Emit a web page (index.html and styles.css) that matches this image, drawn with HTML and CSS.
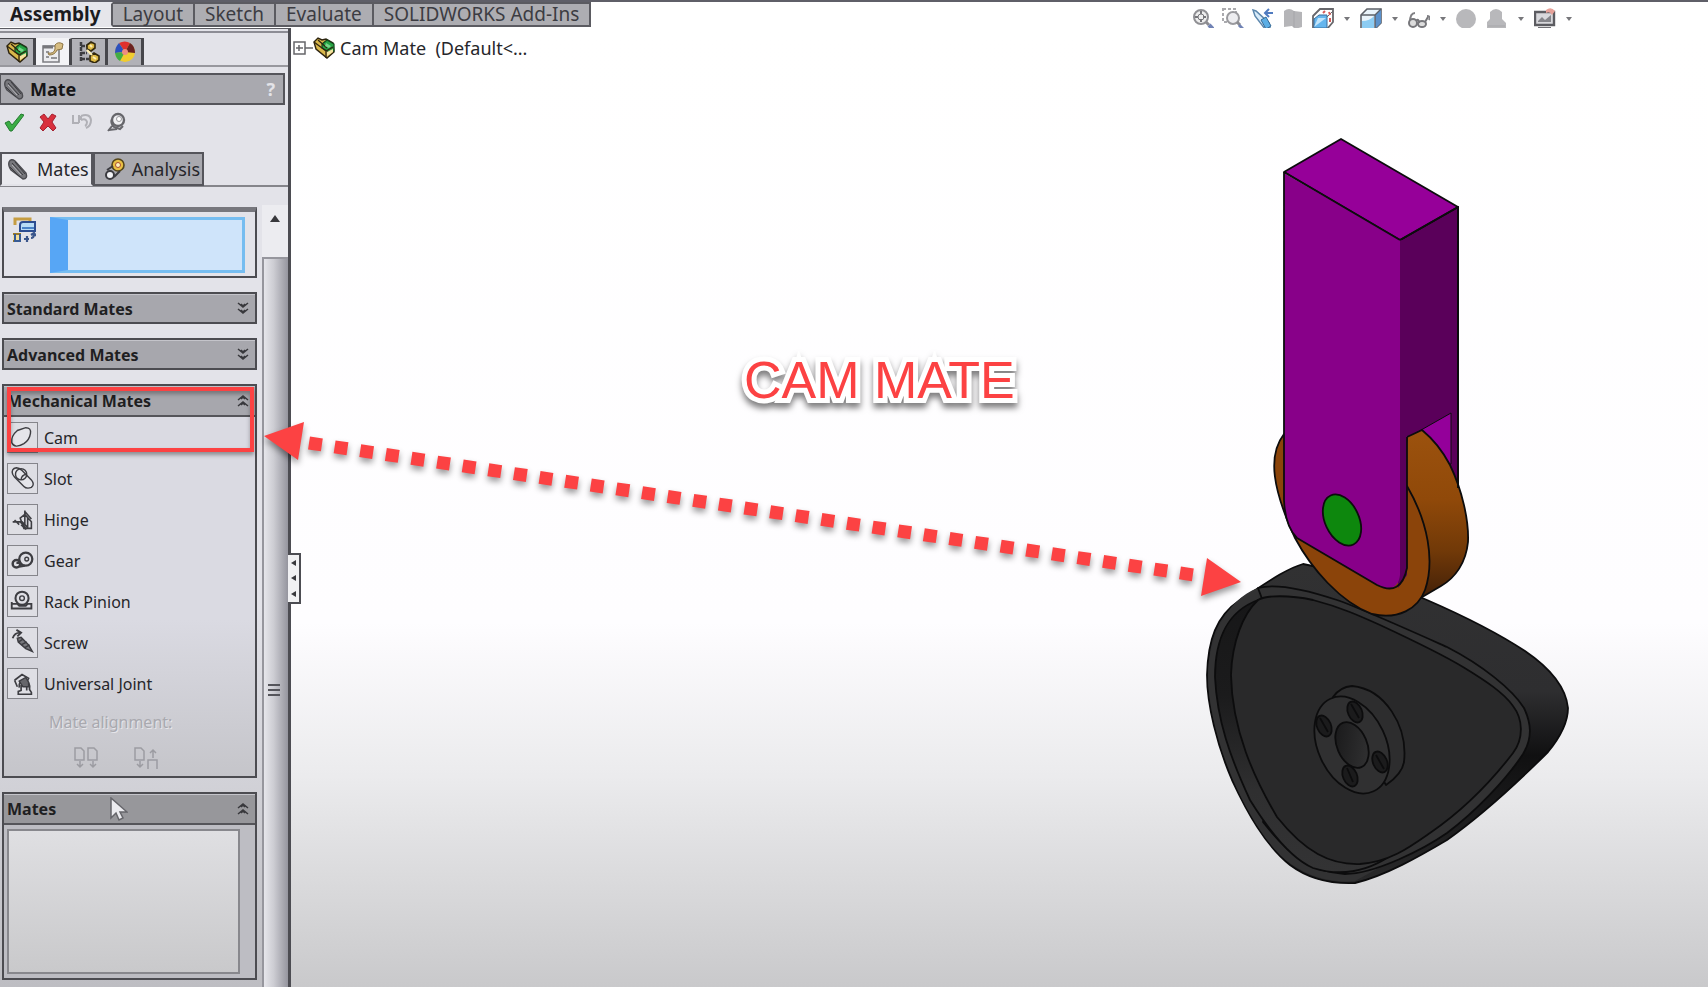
FILE: index.html
```html
<!DOCTYPE html>
<html lang="en">
<head>
  <meta charset="UTF-8" />
  <meta name="viewport" content="width=device-width, initial-scale=1.0" />
  <title>SOLIDWORKS - Cam Mate</title>
  <link rel="stylesheet" href="styles.css">
</head>
<body>
  <!-- shared icons -->
  <svg class="sprite" aria-hidden="true">
    <symbol id="i-clip" viewBox="0 0 22 22">
      <path d="M2 4q2-4 6-1l11 12q2 6-3 6L4 12Q1 8 2 4z" fill="#77777c" stroke="#4b4b50" stroke-width="1.4"/>
      <path d="M5 5l11 12M8 4l10 12M3 9l10 10" stroke="#3c3c40" stroke-width="1" fill="none"/>
      <path d="M5 7l9 10" stroke="#b5b5ba" stroke-width="1"/>
    </symbol>
    <symbol id="i-assembly" viewBox="0 0 22 22">
      <path d="M1 5l4-4 4 2 4-1 7 4 1 9-7 6L3 12z" fill="#d9b74b" stroke="#2e2410" stroke-width="1.4"/>
      <path d="M9 7l5-4 7 4v7l-5 1-7-4z" fill="#25a343" stroke="#12451d" stroke-width="1.2"/>
      <path d="M1 5l12 9v7M5 3l9 8M13 14l7-4" stroke="#2e2410" stroke-width="1.3" fill="none"/>
      <path d="M14 15l6-3v3l-6 4z" fill="#f4e3a0"/>
      <path d="M13 6l5 3-2 2-4-2z" fill="#77d68b"/>
    </symbol>
    <symbol id="i-down" viewBox="0 0 12 14">
      <path d="M1 1l5 4 5-4M1 7l5 4 5-4M4 2l2 2 2-2M4 8l2 2 2-2" fill="none" stroke="#38383c" stroke-width="1.5"/>
    </symbol>
    <symbol id="i-up" viewBox="0 0 12 14">
      <path d="M1 6l5-4 5 4M1 12l5-4 5 4M4 5l2-2 2 2M4 11l2-2 2 2" fill="none" stroke="#38383c" stroke-width="1.5"/>
    </symbol>
  </svg>

  <div class="app">
    <header class="topbar">
      <nav class="ribbon">
        <button class="ribbon-tab active">Assembly</button>
        <button class="ribbon-tab">Layout</button>
        <button class="ribbon-tab">Sketch</button>
        <button class="ribbon-tab">Evaluate</button>
        <button class="ribbon-tab">SOLIDWORKS Add-Ins</button>
      </nav>
      <div class="view-tools">
        <button class="tool" aria-label="Zoom to fit"><svg viewBox="0 0 22 22"><circle cx="9" cy="9" r="7" fill="#eee" stroke="#909094" stroke-width="2"/><path d="M9 3v12M3 9h12" stroke="#77777b" stroke-width="2" stroke-dasharray="3 5"/><circle cx="9" cy="9" r="3" fill="none" stroke="#77777b"/><path d="M14 14l3 3" stroke="#8c8c90" stroke-width="3"/><path d="M17 17l4 4" stroke="#7183b5" stroke-width="4"/></svg></button>
        <button class="tool" aria-label="Zoom to area"><svg viewBox="0 0 22 22"><path d="M1 1h13v13H1z" fill="none" stroke="#aaaaae" stroke-width="2" stroke-dasharray="3 2"/><circle cx="11" cy="10" r="6" fill="#ededf0" stroke="#9a9a9e" stroke-width="2"/><path d="M15 14l3 3" stroke="#8c8c90" stroke-width="3"/><path d="M17 17l4 4" stroke="#7183b5" stroke-width="3"/></svg></button>
        <button class="tool" aria-label="Previous view"><svg viewBox="0 0 22 22"><path d="M1 2l3 1 13 12 1 5-5 1L3 8z" fill="#d9ecfa" stroke="#5c87ad" stroke-width="1.5"/><path d="M9 12l5-3 5 9-5 3z" fill="#5caee5" stroke="#376b96"/><path d="M21 5h-7m3-4l-4 4 4 4" fill="none" stroke="#507bc0" stroke-width="2"/></svg></button>
        <button class="tool" aria-label="Section view"><svg viewBox="0 0 22 22"><path d="M2 3q5-4 10 0l8 1v15l-7 2-3-3-8 1z" fill="#b5b5b8"/><path d="M12 3v16" stroke="#a5a5a9"/></svg></button>
        <button class="tool" aria-label="View orientation"><svg viewBox="0 0 22 22"><path d="M1 8l7-7h13v13l-6 7H1z" fill="#fff" stroke="#66666b" stroke-width="1.8"/><path d="M2 20V11l5-4h8v13z" fill="#65b5ed" stroke="#386d9c"/><path d="M2 19l4-9h8z" fill="#c3e5fb"/><path d="M15 9l6-6" stroke="#66666b"/><path d="M11 5l2-2M17 4l1 3M18 10v4" stroke="#d75b58" stroke-width="2"/></svg></button>
        <button class="drop" aria-label="More orientations"></button>
        <button class="tool" aria-label="Display style"><svg viewBox="0 0 22 22"><path d="M1 7l6-6h14v14l-6 6H1z" fill="#eaf4fb" stroke="#5c6068" stroke-width="1.6"/><path d="M15 7l6-6v14l-6 6z" fill="#5b91cb"/><path d="M2 20V13q8 0 12-5v12z" fill="#8cccf3"/><path d="M1 7h14v14M15 7l6-6" fill="none" stroke="#5c6068" stroke-width="1.4"/></svg></button>
        <button class="drop" aria-label="More display styles"></button>
        <button class="tool" aria-label="Hide or show items"><svg viewBox="0 0 22 22"><path d="M7 5Q2 5 2 14M19 8q4 0 2 4" fill="none" stroke="#808084" stroke-width="2"/><circle cx="5" cy="15" r="4" fill="#ddd" stroke="#77777b" stroke-width="2"/><ellipse cx="14" cy="16" rx="4" ry="3" fill="#ddd" stroke="#77777b" stroke-width="2"/><path d="M8 13q3-3 3 2M17 14l3-5" fill="none" stroke="#77777b" stroke-width="2"/></svg></button>
        <button class="drop" aria-label="More visibility options"></button>
        <button class="tool" aria-label="Edit appearance"><svg viewBox="0 0 22 22"><circle cx="10" cy="11" r="10" fill="#b8b8bb"/></svg></button>
        <button class="tool" aria-label="Apply scene"><svg viewBox="0 0 22 22"><path d="M4 4q6-6 12 0v7l4 4v6H1v-7l3-3z" fill="#b8b8bb"/><path d="M2 18h17" stroke="#a7a7aa"/></svg></button>
        <button class="drop" aria-label="More scenes"></button>
        <button class="tool" aria-label="View settings"><svg viewBox="0 0 22 22"><path d="M1 4h19v13H1z" fill="#d8d8dc" stroke="#5c5c61" stroke-width="2.4"/><path d="M4 13l4-4 3 3 6-5v7H4z" fill="#85858a"/><path d="M4 20h13" stroke="#707075" stroke-width="2"/><path d="M12 2q5-4 9 1l-3 4q-2-4-6-2z" fill="#e7a29a"/></svg></button>
        <button class="drop" aria-label="More view settings"></button>
      </div>
    </header>

    <div class="workspace">
      <aside class="panel">
        <nav class="manager-tabs">
          <button class="manager-tab" aria-label="Feature tree"><svg viewBox="0 0 22 22"><use href="#i-assembly"/></svg></button>
          <button class="manager-tab active" aria-label="Property manager"><svg viewBox="0 0 22 22"><path d="M1 5h16v16H1z" fill="#ededf0" stroke="#7d7d82" stroke-width="1.6"/><path d="M1 6h10" stroke="#77777b" stroke-width="3"/><path d="M4 11h3M4 16h3M9 17h6" stroke="#77777b" stroke-width="1.5"/><path d="M6 12q6 1 7-4V4q3-4 8-1l-1 5-5 1q-2 5-8 5z" fill="#d7bd82" stroke="#8d7545"/></svg></button>
          <button class="manager-tab" aria-label="Configurations"><svg viewBox="0 0 22 22"><path d="M3 1v20M3 5h6M3 12h6M3 18h8" stroke="#3c3c40" stroke-width="2.5" stroke-dasharray="4 1"/><path d="M9 4l4-3 4 2v4l-4 3-4-2zM12 15l4-3 5 3v4l-4 3-5-2z" fill="#ddb944" stroke="#33290e" stroke-width="1.6"/><path d="M9 9l5 5M12 4l2 2M15 16l3 2" stroke="#fff0b5" stroke-width="2"/></svg></button>
          <button class="manager-tab" aria-label="Appearances"><svg viewBox="0 0 22 22"><circle cx="11" cy="11" r="10" fill="#f1cc2e"/><path d="M11 11L5 2Q11-1 16 2z" fill="#df302d"/><path d="M11 11l5-9q5 3 5 10z" fill="#6b2221"/><path d="M11 11L5 2Q1 6 1 12z" fill="#2b50be"/><path d="M11 11L1 12q1 6 5 8z" fill="#42ad45"/><circle cx="11" cy="11" r="3" fill="#ef8c80"/></svg></button>
        </nav>

        <div class="pm-title">
          <svg class="clip" viewBox="0 0 22 22"><use href="#i-clip"/></svg>
          <h1>Mate</h1>
          <button class="help" aria-label="Help">?</button>
        </div>

        <div class="pm-actions">
          <button aria-label="OK"><svg viewBox="0 0 20 20"><path d="M1 11l4-2 3 4L17 2l3 1L8 19H6z" fill="#3bad45" stroke="#257b31"/></svg></button>
          <button aria-label="Cancel"><svg viewBox="0 0 20 20"><path d="M2 5l4-3 4 5 4-5 4 2-4 6 4 6-3 3-5-5-5 5-3-3 4-6z" fill="#d9303d" stroke="#a52231"/></svg></button>
          <button aria-label="Undo"><svg viewBox="0 0 20 20"><path d="M1 3v8h6M7 3v8M9 4q9-3 10 4 0 6-5 8M9 4v4M9 8q5-2 6 2 0 3-2 4" fill="none" stroke="#b0b0b6" stroke-width="2"/></svg></button>
          <button aria-label="Keep visible"><svg viewBox="0 0 20 20"><circle cx="12" cy="8" r="6" fill="#efeff2" stroke="#66666b" stroke-width="2.4"/><path d="M6 7q-2 4 2 8l6 2 3-3M6 14l-4 5M3 18l8-1" fill="none" stroke="#66666b" stroke-width="2"/><circle cx="13" cy="7" r="2.5" fill="#fff" stroke="#99999e"/></svg></button>
        </div>

        <nav class="pm-tabs">
          <button class="pm-tab active"><svg viewBox="0 0 22 22"><use href="#i-clip"/></svg>Mates</button>
          <button class="pm-tab"><svg viewBox="0 0 22 22"><circle cx="14" cy="7" r="6" fill="#e9bf43" stroke="#54451a" stroke-width="1.6"/><circle cx="14" cy="7" r="2.5" fill="#fff2bd" stroke="#aa4e33"/><circle cx="6" cy="17" r="4" fill="#f4f4f7" stroke="#3b3b40" stroke-width="2"/><path d="M3 12l6-4M10 19l6-6" stroke="#3b3b40" stroke-width="2"/></svg>Analysis</button>
        </nav>

        <div class="pm-body">
          <div class="groups">
            <section class="group selections">
              <svg class="sel-icon" viewBox="0 0 24 26"><path d="M3 8V2h15v4" fill="none" stroke="#c69d42" stroke-width="3"/><path d="M8 12V8q0-3 3-3h12v9H8z" fill="#b7dcf7" stroke="#2c4d91" stroke-width="2"/><path d="M10 11h12" stroke="#4a83c7" stroke-width="2"/><path d="M1 17h7v7H1" fill="#f2df9c" stroke="#9b7b29" stroke-width="2"/><path d="M3 17v7h5v-7" fill="none" stroke="#375b95" stroke-width="2"/><path d="M12 22h5M15 19v6M19 21q3 0 3-4m-3 1l3-2 2 3" fill="none" stroke="#3b568b" stroke-width="2.2"/></svg>
              <textarea class="sel-box" aria-label="Mate selections"></textarea>
            </section>

            <section class="group">
              <button class="group-head">Standard Mates<svg viewBox="0 0 12 14"><use href="#i-down"/></svg></button>
            </section>

            <section class="group">
              <button class="group-head">Advanced Mates<svg viewBox="0 0 12 14"><use href="#i-down"/></svg></button>
            </section>

            <section class="group mechanical">
              <button class="group-head">Mechanical Mates<svg viewBox="0 0 12 14"><use href="#i-up"/></svg></button>
              <div class="mate-list">
                <button class="mate"><svg viewBox="0 0 31 31"><path d="M4 21Q3 14 10 8L19 5q6 0 5 6-1 7-7 11-10 6-13-1z" fill="#e5e5ea"/></svg>Cam</button>
                <button class="mate"><svg viewBox="0 0 31 31"><path d="M5 11q-2-6 4-7 3 0 6 3l10 10q4 5 0 8-5 2-8-1L7 14z" fill="#e5e5ea"/><circle cx="14" cy="11" r="6" fill="none"/><path d="M14 17q0-5 6-6" fill="none"/></svg>Slot</button>
                <button class="mate"><svg viewBox="0 0 31 31"><path d="M5 18h8l7 8M7 16l5 5M13 14l5-4 7 8v7h-8zM18 6v15M18 7l7 8M14 17l8 8M14 21l5 5M21 14v11" fill="none" stroke-width="1.7"/></svg>Hinge</button>
                <button class="mate"><svg viewBox="0 0 31 31"><circle cx="19" cy="14" r="7" fill="none" stroke-width="2.4"/><circle cx="20" cy="14" r="2" fill="none"/><circle cx="9" cy="19" r="4" fill="none" stroke-width="2.6"/><path d="M9 18h4M12 22l6-1" stroke-width="2.4"/></svg>Gear</button>
                <button class="mate"><svg viewBox="0 0 31 31"><circle cx="15" cy="12" r="7" fill="none" stroke-width="2.2"/><circle cx="15" cy="12" r="2.5" fill="none"/><path d="M4 18h6l2 2h7l2-2h4v5H4zM4 16v5" fill="none" stroke-width="2"/></svg>Rack Pinion</button>
                <button class="mate"><svg viewBox="0 0 31 31"><path d="M5 11q2-6 8-6M9 2l5 3-4 4" fill="none" stroke-width="2"/><path d="M10 11l4-1 8 8 4 7-7-3-8-7z" fill="#77777c" stroke-width="1.6"/><path d="M11 15l5-3M14 18l6-3M18 21l5-3" stroke-width="1.6"/></svg>Screw</button>
                <button class="mate"><svg viewBox="0 0 31 31"><path d="M7 12l8-6 7 4-2 4M7 12l3 7M12 20q-1-8 6-7 6 0 5 9l2 3v2H11v-3l3-1v-5h6v5" fill="none" stroke-width="1.8"/><path d="M12 13l7-4 3 5v5h-6z" fill="#66666b"/></svg>Universal Joint</button>
              </div>
              <div class="align">
                <span>Mate alignment:</span>
                <div class="align-buttons">
                  <button disabled aria-label="Aligned"><svg viewBox="0 0 26 24"><path d="M2 14V2h6l3 3v9zM15 14V2h6l3 3v9zM7 15v6m-3-3l3 3 3-3M20 15v6m-3-3l3 3 3-3"/></svg></button>
                  <button disabled aria-label="Anti-aligned"><svg viewBox="0 0 26 24"><path d="M2 14V2h6l3 3v9zM7 15v6m-3-3l3 3 3-3M20 12V4m-3 3l3-3 3 3M15 23V14h9v9"/></svg></button>
                </div>
              </div>
              <div class="highlight"></div>
            </section>

            <section class="group mates">
              <button class="group-head">Mates<svg viewBox="0 0 12 14"><use href="#i-up"/></svg></button>
              <select class="mates-box" size="4" aria-label="Mates"></select>
              <svg class="cursor" viewBox="0 0 18 25"><path d="M1 1v20l5-5 3 7 4-2-3-6h7z" fill="#ececf0" stroke="#66666b" stroke-width="1.5"/></svg>
            </section>
          </div>

          <div class="scrollbar">
            <button class="scroll-up" aria-label="Scroll up"></button>
            <div class="thumb"><i></i><i></i><i></i></div>
          </div>
        </div>
        <button class="splitter" aria-label="Collapse panel"><i></i><i></i><i></i></button>
      </aside>

      <main class="viewport">
        <div class="tree">
          <svg class="expander" viewBox="0 0 20 14"><path d="M1 1h11v12H1zM3 7h7M6 4v6M12 7h8" fill="none" stroke="#66666a" stroke-width="1.5"/></svg>
          <svg class="tree-icon" viewBox="0 0 22 22"><use href="#i-assembly"/></svg>
          <span>Cam Mate &nbsp;(Default&lt;...</span>
        </div>
      </main>
    </div>

    <svg class="model" viewBox="1200 130 380 760" role="img" aria-label="Cam and follower assembly">
      <defs>
        <linearGradient id="wheel" x1="0" y1="0" x2="0" y2="1">
          <stop offset="0" stop-color="#9c520e"/><stop offset=".4" stop-color="#904909"/><stop offset=".7" stop-color="#713908"/><stop offset="1" stop-color="#3d1d08"/>
        </linearGradient>
        <linearGradient id="camside" x1="0" y1="0" x2="0" y2="1">
          <stop offset="0" stop-color="#313132"/><stop offset=".4" stop-color="#2e2e30"/><stop offset=".6" stop-color="#101011"/><stop offset="1" stop-color="#29292a"/>
        </linearGradient>
        <linearGradient id="pocket" x1="0" y1="0" x2="0" y2="1">
          <stop offset="0" stop-color="#171718"/><stop offset=".35" stop-color="#1b1b1c"/><stop offset=".7" stop-color="#2f2f30"/><stop offset="1" stop-color="#333334"/>
        </linearGradient>
        <linearGradient id="bore" x1="0" y1="0" x2="1" y2="1">
          <stop offset="0" stop-color="#171718"/><stop offset="1" stop-color="#343435"/>
        </linearGradient>
      </defs>
      <g stroke="#0c0c0d" stroke-width="1.8" stroke-linejoin="round">
        <!-- cam -->
        <path fill="url(#camside)" d="M1303 564C1285 569 1262 586 1240 600C1216 616 1208 640 1207 675C1207 705 1217 745 1232 780C1247 812 1265 845 1290 865C1310 880 1332 884 1355 883C1385 876 1420 856 1447 840C1485 813 1520 780 1548 752C1562 735 1568 722 1568 708C1566 688 1550 668 1525 651C1490 628 1450 610 1427 600L1380 580z"/>
        <path fill="#323233" stroke="none" d="M1258 588C1225 600 1209 640 1208 675C1208 705 1218 745 1233 780C1247 812 1268 848 1291 864Q1320 884 1355 881L1397 858L1258 600z"/>
        <path fill="#323233" d="M1258 588C1276 583 1304 589 1337 600C1360 608 1400 626 1447 647C1482 665 1512 689 1524 708C1531 723 1533 737 1523 754C1506 780 1475 812 1447 833C1424 849 1375 874 1345 874C1311 872 1290 856 1263 822L1300 700z" />
        <path fill="url(#pocket)" d="M1258 600C1226 612 1215 640 1215 677C1217 720 1230 757 1250 800C1268 829 1290 858 1313 868C1345 878 1372 868 1390 856L1300 800L1240 640z"/>
        <path fill="#29292a" d="M1258 600C1266 595 1290 595 1313 600C1340 607 1360 616 1380 625C1410 639 1440 653 1463 667C1486 681 1504 693 1513 706C1523 719 1524 738 1513 753C1490 783 1462 811 1430 833C1410 847 1390 862 1360 864C1330 865 1305 852 1277 817C1254 778 1232 730 1231 675C1232 642 1243 614 1258 600z"/>
        <!-- hub -->
        <path fill="#2d2d2e" d="M1333 697Q1340 687 1352 686C1385 689 1408 726 1404 762Q1402 774 1386 785L1360 740z"/>
        <ellipse cx="1352" cy="745" rx="34" ry="51" transform="rotate(-25 1352 745)" fill="#303031"/>
        <ellipse cx="1352" cy="745" rx="15" ry="24" transform="rotate(-23 1352 745)" fill="url(#bore)"/>
        <g fill="#1b1b1c">
          <ellipse cx="1355" cy="712" rx="7" ry="11" transform="rotate(-23 1355 712)"/>
          <ellipse cx="1324" cy="726" rx="7" ry="11" transform="rotate(-23 1324 726)"/>
          <ellipse cx="1380" cy="762" rx="7" ry="11" transform="rotate(-23 1380 762)"/>
          <ellipse cx="1350" cy="776" rx="7" ry="11" transform="rotate(-23 1350 776)"/>
        </g>
        <path fill="none" d="M1351 704l8 14M1320 718l8 14M1376 755l8 14M1347 768l6 14"/>
        <!-- follower -->
        <path fill="#5a005a" d="M1400 240L1458 207V492L1400 480z"/>
        <path fill="#94009a" stroke-width="1" d="M1451 413L1407 438V470L1451 464z"/>
        <path fill="url(#wheel)" d="M1407 437L1422 430Q1439 444 1450 465C1462 490 1469 520 1468 542C1466 563 1455 578 1441 586L1412 603L1395 520z"/>
        <path fill="#8b440a" d="M1284 434C1267 456 1273 490 1295 538C1311 568 1340 602 1372 614C1398 620 1418 609 1425 590C1435 561 1428 522 1407 486z"/>
        <path fill="#960099" d="M1284 172L1341 139L1458 207L1400 240z"/>
        <path fill="#5a005a" stroke="none" d="M1398 240h9V575L1398 588z"/>
        <path fill="#880089" stroke="none" d="M1284 173L1400 240V575Q1398 591 1383 588L1297 538Q1284 523 1284 500z"/>
        <path fill="none" d="M1284 172V500Q1285 526 1297 538L1377 585Q1401 597 1407 568V437M1284 172L1400 240M1400 240L1458 207V488"/>
        <ellipse cx="1342" cy="520" rx="17" ry="27" transform="rotate(-25 1342 520)" fill="#0d870d"/>
      </g>
    </svg>

    <svg class="arrow" viewBox="260 410 990 200" aria-hidden="true">
      <path d="M309 443L1194 575" stroke="#fc4243" stroke-width="13" stroke-dasharray="13 12.9" fill="none"/>
      <path d="M264 436L304 422L298 460zM1241 582L1207 558L1201 596z" fill="#fc4243"/>
    </svg>
    <p class="callout">CAM MATE</p>
  </div>
</body>
</html>
```
FILE: styles.css
```css
* {
  box-sizing: border-box;
}
body {
  margin: 0;
  font-family: "Noto Sans", "Open Sans", sans-serif;
  font-size: 16px;
  color: #26262a;
  background: #fff;
}
button {
  margin: 0;
  padding: 0;
  border: none;
  background: none;
  color: inherit;
  font: inherit;
  cursor: pointer;
}
svg {
  display: block;
  flex: none;
}
.sprite {
  position: absolute;
  width: 0;
  height: 0;
}
.app {
  position: relative;
  display: flex;
  flex-direction: column;
  min-height: 100vh;
  overflow: hidden;
}

/* top bar */
.topbar {
  display: flex;
  justify-content: space-between;
  border-top: 2px solid #5f5f68;
}
.ribbon {
  display: flex;
}
.ribbon-tab {
  height: 25px;
  padding: 0 10px 2px;
  border: 2px solid #5b5b61;
  border-left-width: 0;
  background: #adadb2;
  font-size: 19px;
  line-height: 20px;
  color: #3c3c42;
  white-space: nowrap;
}
.ribbon-tab.active {
  border-color: #e6e6eb #5b5b61 #e6e6eb #e6e6eb;
  background: #e6e6eb;
  font-weight: bold;
  color: #1b1b1e;
}
.view-tools {
  display: flex;
  align-items: center;
  gap: 8px;
  padding: 8px 134px 0 0;
  height: 26px;
}
.tool svg {
  width: 22px;
  height: 22px;
}
.drop {
  width: 10px;
  height: 22px;
}
.drop::before {
  content: "";
  display: block;
  width: 0;
  margin: auto;
  border: 3px solid transparent;
  border-top: 4px solid #77777b;
  border-bottom: 0;
}

/* property manager */
.workspace {
  display: flex;
  flex: 1;
}
.panel {
  position: relative;
  display: flex;
  flex-direction: column;
  width: 291px;
  flex: none;
  border-right: 3px solid #4c4c52;
  border-top: 1px solid #5b5b61;
  background: linear-gradient(#e3e3e9 0, #e3e3e9 60%, #d4d4da 76%, #bdbdc2 100%);
}
.manager-tabs {
  display: flex;
  margin-top: 2px;
  padding-top: 5px;
  border-top: 2px solid #8d8d95;
  border-bottom: 2px solid #98989e;
}
.manager-tab {
  display: flex;
  align-items: center;
  justify-content: center;
  width: 36px;
  height: 27px;
  border: solid #46464b;
  border-width: 1px 3px 0 0;
  background: #b1b1b7;
}
.manager-tab.active {
  border-top-color: #f3f3f6;
  background: #f3f3f6;
}
.manager-tab svg {
  width: 22px;
  height: 22px;
}
.pm-title {
  display: flex;
  align-items: center;
  gap: 5px;
  height: 32px;
  margin: 6px 3px 0 0;
  padding: 0 8px 0 2px;
  border: 2px solid #55555b;
  border-left-width: 1px;
  background: #a9a9af;
}
.pm-title .clip {
  width: 22px;
  height: 22px;
}
.pm-title h1 {
  margin: 0;
  font-size: 18px;
  line-height: 24px;
  color: #161618;
}
.help {
  margin-left: auto;
  font-size: 18px;
  font-weight: bold;
  line-height: 24px;
  color: #e3e3e8;
}
.pm-actions {
  display: flex;
  gap: 14px;
  padding: 7px 4px;
}
.pm-actions svg {
  width: 20px;
  height: 20px;
}
.pm-tabs {
  display: flex;
  margin-top: 13px;
  border-bottom: 2px solid #85858b;
}
.pm-tab {
  display: flex;
  align-items: center;
  gap: 6px;
  height: 34px;
  margin-bottom: -1px;
  padding: 0 2px 0 9px;
  border: 2px solid #55555b;
  background: #a9a9af;
  font-size: 18px;
  line-height: 24px;
}
.pm-tab.active {
  gap: 8px;
  padding: 0 2px 0 5px;
  border-bottom-color: #e3e3e9;
  background: #e9e9ee;
}
.pm-tab svg {
  width: 22px;
  height: 22px;
}
.pm-body {
  display: flex;
  flex: 1;
  gap: 5px;
  padding-top: 18px;
}
.groups {
  display: flex;
  flex: 1;
  flex-direction: column;
  gap: 14px;
  min-width: 0;
  padding: 2px 0 7px 2px;
}
.group {
  position: relative;
  border: 2px solid #4c4c51;
}
.group-head {
  display: flex;
  align-items: center;
  justify-content: space-between;
  width: 100%;
  height: 28px;
  padding: 0 6px 0 3px;
  border-top: 1px solid #c4c4ca;
  background: #a7a7ad;
  font-weight: bold;
  line-height: 20px;
  color: #1f1f22;
}
.group-head svg {
  width: 12px;
  height: 14px;
}
.selections {
  display: flex;
  gap: 14px;
  height: 71px;
  padding: 5px 10px 3px 8px;
  border-top: 5px solid #77777d;
}
.sel-icon {
  width: 24px;
  height: 26px;
}
.sel-box {
  flex: 1;
  min-width: 0;
  border: 3px solid #76bdf0;
  border-left: 18px solid #57a6f5;
  background: #cfe4fa;
  resize: none;
}
.mechanical {
  background: linear-gradient(#dadae2 60%, #c5c5ca);
}
.mechanical .group-head,
.mates .group-head {
  height: 31px;
  border-bottom: 2px solid #55555a;
}
.mate-list {
  display: flex;
  flex-direction: column;
  gap: 10px;
  padding: 5px 3px 3px;
}
.mate {
  display: flex;
  align-items: center;
  gap: 6px;
  line-height: 24px;
}
.mate svg {
  width: 31px;
  height: 31px;
  border: 1px solid #85858b;
  background: #dedee4;
  stroke: #3d3d42;
  stroke-width: 1.5;
}
.align {
  padding: 8px 45px 6px;
  line-height: 24px;
  color: #a9a9af;
  text-shadow: 1px 1px #e6e6ea;
}
.align-buttons {
  display: flex;
  gap: 34px;
  padding: 12px 24px 0;
}
.align-buttons svg {
  width: 26px;
  height: 24px;
  fill: none;
  stroke: #9c9ca2;
  stroke-width: 1.5;
}
.highlight {
  position: absolute;
  top: 1px;
  right: 1px;
  left: 3px;
  height: 65px;
  border: 4px solid #fc4243;
  box-shadow: 0 3px 4px rgba(0, 0, 0, .35), inset 0 3px 4px rgba(0, 0, 0, .3);
  pointer-events: none;
}
.mates {
  background: #bdbdc3;
}
.mates .group-head {
  background: #97979b;
}
.mates-box {
  display: block;
  width: 233px;
  height: 145px;
  margin: 4px 3px;
  border: 2px solid #88888d;
  border-radius: 0;
  background: linear-gradient(#dfdfe2, #c9c9cb);
}
.cursor {
  position: absolute;
  top: 3px;
  left: 106px;
  width: 18px;
  height: 25px;
}
.scrollbar {
  display: flex;
  flex: none;
  flex-direction: column;
  width: 26px;
}
.scroll-up {
  height: 52px;
  padding-bottom: 26px;
  background: #ececf0;
}
.scroll-up::before {
  content: "";
  display: block;
  width: 0;
  margin: auto;
  border: 5px solid transparent;
  border-top: 0;
  border-bottom: 7px solid #38383c;
}
.thumb {
  display: flex;
  flex: 1;
  flex-direction: column;
  align-items: center;
  justify-content: center;
  gap: 3px;
  padding: 134px 4px 0 0;
  border: 2px solid #96969d;
  border-width: 2px 0 0 2px;
  background: linear-gradient(90deg, #e6e6eb, #cdcdd3 40%, #95959e);
}
.thumb i {
  width: 12px;
  height: 2px;
  background: #55555b;
}
.splitter {
  position: absolute;
  top: 524px;
  right: -13px;
  display: flex;
  flex-direction: column;
  align-items: center;
  justify-content: space-around;
  width: 13px;
  height: 51px;
  border: 2px solid #4c4c52;
  border-left: 0;
  background: #f1f1f3;
}
.splitter i {
  border: 3px solid transparent;
  border-right: 5px solid #38383c;
  border-left: 0;
}

/* graphics area */
.viewport {
  flex: 1;
  background: linear-gradient(#fff 0, #fefdff 62%, #ebebed 78%, #c9c9cb 100%);
}
.tree {
  display: flex;
  align-items: center;
  padding: 8px 2px;
  font-size: 18px;
  line-height: 24px;
}
.expander {
  width: 20px;
  height: 14px;
}
.tree-icon {
  width: 22px;
  height: 22px;
  margin-right: 5px;
}
.model {
  position: absolute;
  top: 130px;
  right: 128px;
  width: 380px;
  height: 760px;
}
.arrow {
  position: absolute;
  top: 410px;
  left: 260px;
  width: 990px;
  height: 200px;
  filter: drop-shadow(0 4px 3px rgba(0, 0, 0, .4));
  pointer-events: none;
}
.callout {
  position: absolute;
  top: 350px;
  left: 744px;
  margin: 0;
  font-family: "Liberation Sans", Arial, sans-serif;
  font-size: 52px;
  line-height: 60px;
  color: #fc4243;
  -webkit-text-stroke: 10px #fff;
  paint-order: stroke fill;
  filter: drop-shadow(0 5px 3px rgba(0, 0, 0, .5));
}
```
